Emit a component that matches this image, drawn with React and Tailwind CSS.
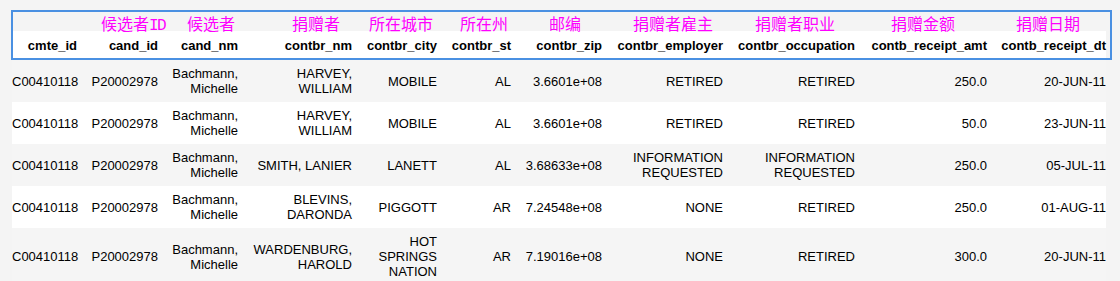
import React from "react";

const cols = [
  { key: "cmte_id", w: "w-[72px]", label: null, pl: "" },
  { key: "cand_id", w: "w-[81px]", label: "候选者ID", pl: "pl-[17px]" },
  { key: "cand_nm", w: "w-[80px]", label: "候选者", pl: "pl-[22px]" },
  { key: "contbr_nm", w: "w-[114px]", label: "捐赠者", pl: "pl-[47px]" },
  { key: "contbr_city", w: "w-[85px]", label: "所在城市", pl: "pl-[10px]" },
  { key: "contbr_st", w: "w-[74px]", label: "所在州", pl: "pl-[16px]" },
  { key: "contbr_zip", w: "w-[91px]", label: "邮编", pl: "pl-[31px]" },
  { key: "contbr_employer", w: "w-[121px]", label: "捐赠者雇主", pl: "pl-[24px]" },
  { key: "contbr_occupation", w: "w-[132px]", label: "捐赠者职业", pl: "pl-[25px]" },
  { key: "contb_receipt_amt", w: "w-[132px]", label: "捐赠金额", pl: "pl-[29px]" },
  { key: "contb_receipt_dt", w: "w-[112px]", label: "捐赠日期", pl: "pl-[22px]" },
];

const rows = [
  ["C00410118", "P20002978", "Bachmann, Michelle", "HARVEY, WILLIAM", "MOBILE", "AL", "3.6601e+08", "RETIRED", "RETIRED", "250.0", "20-JUN-11"],
  ["C00410118", "P20002978", "Bachmann, Michelle", "HARVEY, WILLIAM", "MOBILE", "AL", "3.6601e+08", "RETIRED", "RETIRED", "50.0", "23-JUN-11"],
  ["C00410118", "P20002978", "Bachmann, Michelle", "SMITH, LANIER", "LANETT", "AL", "3.68633e+08", "INFORMATION REQUESTED", "INFORMATION REQUESTED", "250.0", "05-JUL-11"],
  ["C00410118", "P20002978", "Bachmann, Michelle", "BLEVINS, DARONDA", "PIGGOTT", "AR", "7.24548e+08", "NONE", "RETIRED", "250.0", "01-AUG-11"],
  ["C00410118", "P20002978", "Bachmann, Michelle", "WARDENBURG, HAROLD", "HOT SPRINGS NATION", "AR", "7.19016e+08", "NONE", "RETIRED", "300.0", "20-JUN-11"],
];

function padFor(i) {
  if (i === 0) return "pl-0 pr-[7px]";
  if (i === cols.length - 1) return "pl-[4px] pr-0";
  return "pl-[4px] pr-[7px]";
}

function Label({ text }) {
  if (!text) return null;
  if (text.endsWith("ID")) {
    return (
      <>
        {text.slice(0, -2)}
        <span className="font-['Liberation_Mono',monospace] tracking-[-1.5px]">ID</span>
      </>
    );
  }
  return text;
}

export default function App() {
  return (
    <div className="relative w-[1120px] h-[281px] overflow-hidden bg-[#f4f4f4] pt-[10px] pl-[12px] font-['Liberation_Sans',Arial,sans-serif] text-[13px] text-black">
      <table className="table-fixed border-collapse w-[1094px]">
        <colgroup>
          {cols.map((c) => (
            <col key={c.key} className={c.w} />
          ))}
        </colgroup>
        <thead>
          <tr>
            {cols.map((c) => (
              <th
                key={c.key}
                className={`align-top text-left font-normal p-0 pt-[5px] whitespace-nowrap text-[16px] text-[#ff00ff] font-['Noto_Sans_CJK_SC',sans-serif] ${c.pl}`}
              >
                <div className="h-[16px] leading-[16px] overflow-visible">
                  <Label text={c.label} />
                </div>
              </th>
            ))}
          </tr>
          <tr className="bg-white">
            {cols.map((c, i) => (
              <th
                key={c.key}
                className={`align-middle text-right font-bold whitespace-nowrap leading-[15px] py-[7px] ${padFor(i)}`}
              >
                {c.key}
              </th>
            ))}
          </tr>
        </thead>
        <tbody>
          {rows.map((r, ri) => (
            <tr key={ri} className={ri % 2 === 0 ? "bg-[#f5f5f5]" : "bg-white"}>
              {r.map((v, i) => (
                <td
                  key={i}
                  className={`align-middle text-right leading-[15px] py-[6px] ${padFor(i)}`}
                >
                  {v}
                </td>
              ))}
            </tr>
          ))}
        </tbody>
      </table>
      <div className="absolute left-[11px] top-[10px] w-[1101px] h-[50px] border-2 border-[#4a90e2] pointer-events-none" />
    </div>
  );
}
